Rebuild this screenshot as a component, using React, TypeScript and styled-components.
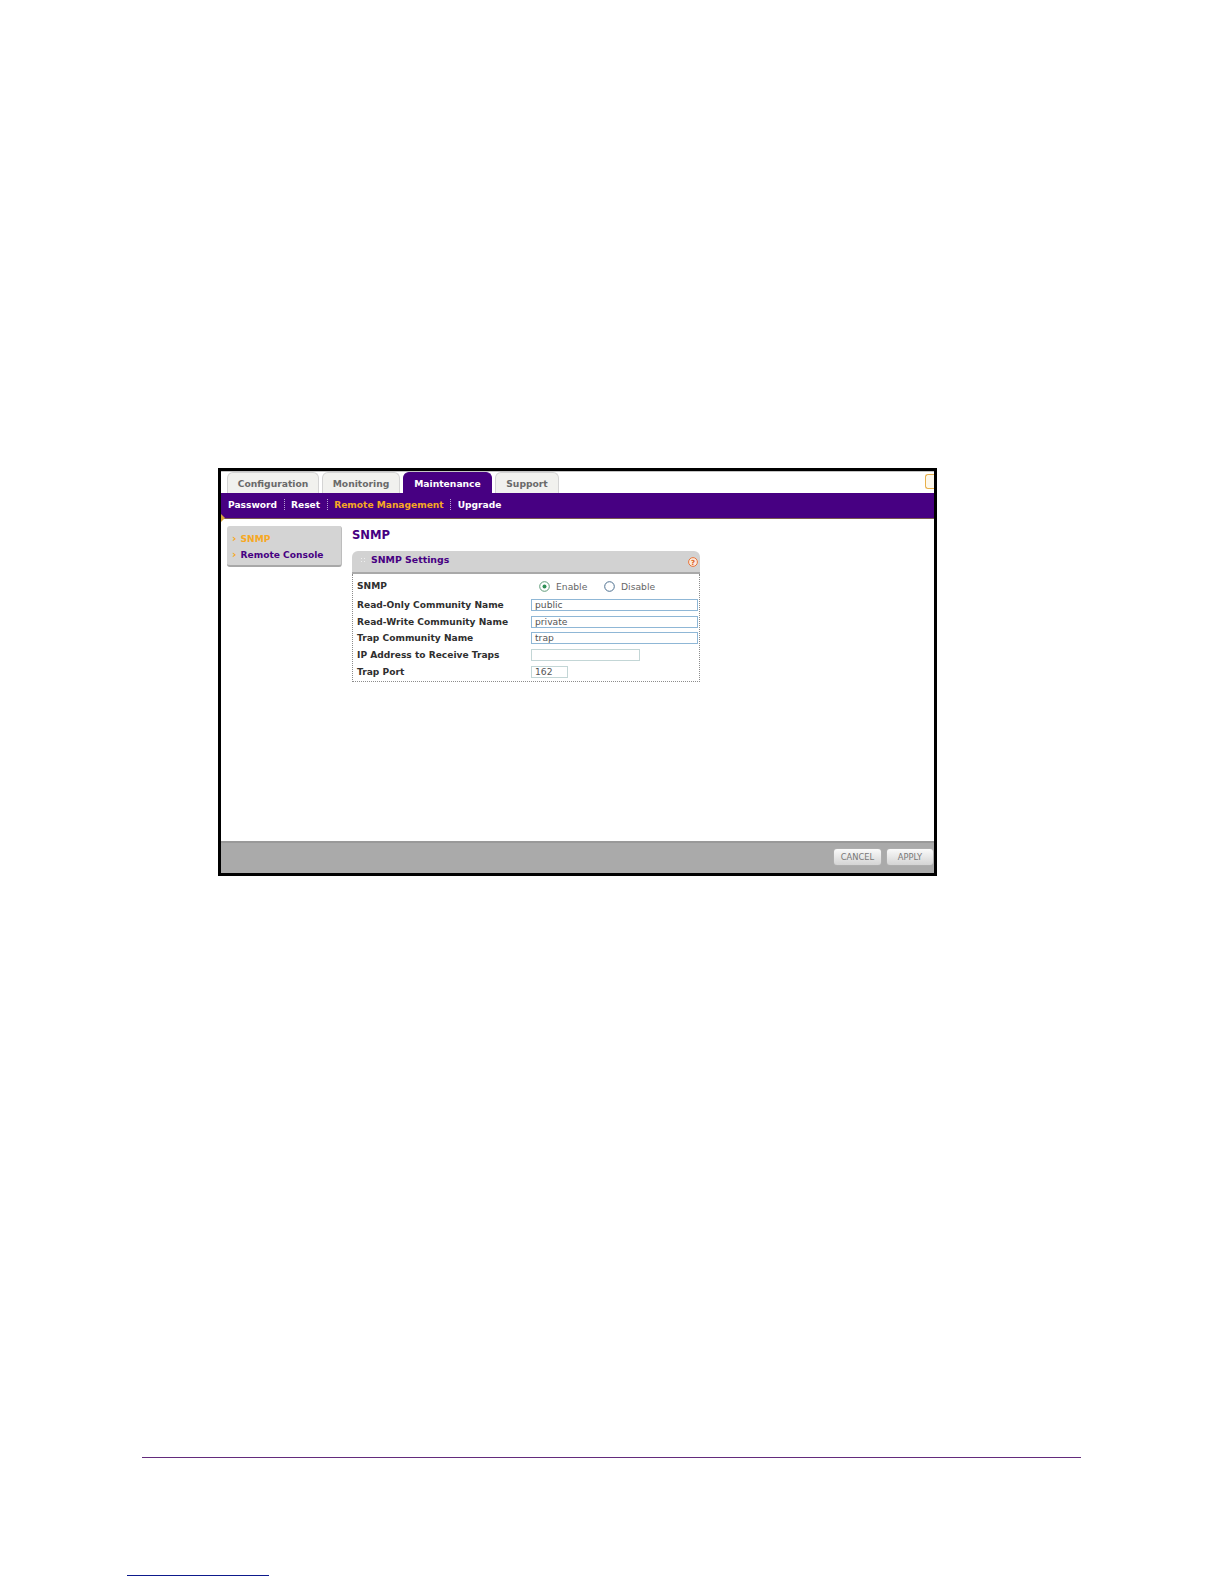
import React from "react";
import styled, { createGlobalStyle } from "styled-components";

const GlobalStyle = createGlobalStyle`
  html, body {
    margin: 0;
    padding: 0;
    background: #fff;
    font-family: "DejaVu Sans", Verdana, sans-serif;
  }
`;

const Page = styled.div`
  width: 1224px;
  height: 1584px;
  box-sizing: border-box;
  padding-top: 468px;
  overflow: hidden;
`;

const Frame = styled.div`
  display: flex;
  flex-direction: column;
  width: 719px;
  height: 408px;
  margin-left: 218px;
  box-sizing: border-box;
  border: 3px solid #000;
  background: #fff;
`;

const TabBar = styled.div`
  display: flex;
  align-items: flex-end;
  justify-content: space-between;
  height: 22px;
  box-sizing: border-box;
  border-top: 1px solid #c4c4c4;
  padding-left: 6px;
`;

const Tabs = styled.div`
  display: flex;
  gap: 3px;
`;

const Tab = styled.div<{ $active?: boolean; $width: number }>`
  width: ${p => p.$width}px;
  height: 21px;
  box-sizing: border-box;
  border-radius: 6px 6px 0 0;
  border: 1px solid ${p => (p.$active ? "#470082" : "#d4d4d4")};
  border-bottom: none;
  background: ${p => (p.$active ? "#470082" : "#f1f1ee")};
  color: ${p => (p.$active ? "#fff" : "#6a6a6a")};
  font-size: 9.2px;
  font-weight: bold;
  line-height: 22px;
  text-align: center;
`;

const LogoutChip = styled.div`
  width: 9px;
  height: 15px;
  margin-bottom: 4px;
  box-sizing: border-box;
  border: 1px solid #e8b04a;
  border-right: none;
  border-radius: 3px 0 0 3px;
  background: #fdf8ec;
`;

const SubNav = styled.div`
  position: relative;
  display: flex;
  align-items: center;
  height: 26px;
  padding: 0 0 2px 7px;
  box-sizing: border-box;
  background: #470082;
  border-bottom: 1px solid #7a5a50;
`;

const NavCorner = styled.span`
  position: absolute;
  left: 0;
  bottom: -4px;
  width: 0;
  height: 0;
  border-top: 4px solid transparent;
  border-bottom: 4px solid transparent;
  border-left: 4px solid #d9a53a;
`;

const NavLink = styled.span<{ $active?: boolean }>`
  color: ${p => (p.$active ? "#f7a823" : "#fff")};
  font-size: 9.1px;
  font-weight: bold;
  white-space: nowrap;
`;

const NavDivider = styled.span`
  height: 11px;
  margin: 0 6.5px;
  border-left: 1px dotted #b9a5d4;
`;

const Body = styled.div`
  flex: 1;
  display: flex;
  align-items: flex-start;
  padding: 7px 0 0 6px;
  gap: 10px;
`;

const SideMenu = styled.div`
  display: flex;
  flex-direction: column;
  gap: 5px;
  width: 115px;
  height: 41px;
  box-sizing: border-box;
  padding: 7px 0 0 5px;
  border-radius: 3px;
  background: #d4d4d4;
  border-bottom: 2px solid #a8a8a8;
  border-right: 1px solid #bdbdbd;
`;

const SideItem = styled.div<{ $active?: boolean }>`
  display: flex;
  align-items: center;
  gap: 4px;
  height: 11px;
  color: ${p => (p.$active ? "#f7a823" : "#470082")};
  font-size: 9.1px;
  font-weight: bold;
  white-space: nowrap;

  &::before {
    content: "›";
    color: #f7a823;
    font-size: 11px;
    font-weight: bold;
  }
`;

const Content = styled.div`
  display: flex;
  flex-direction: column;
`;

const Title = styled.h1`
  margin: 1px 0 7px;
  height: 17px;
  color: #470082;
  font-size: 11.6px;
  font-weight: bold;
  line-height: 17px;
`;

const Panel = styled.div`
  width: 348px;
  height: 131px;
  display: flex;
  flex-direction: column;
`;

const PanelHeader = styled.div`
  position: relative;
  display: flex;
  align-items: flex-start;
  gap: 6px;
  height: 23px;
  box-sizing: border-box;
  padding: 2px 0 0 8px;
  border-radius: 6px 6px 0 0;
  background: #d2d2d2;
  border-bottom: 2px solid #a9a9a9;
`;

const Grip = styled.span`
  width: 5px;
  height: 6px;
  margin-top: 4px;
  background-image: radial-gradient(#eee 40%, transparent 45%);
  background-size: 3px 3px;
`;

const PanelTitle = styled.span`
  color: #470082;
  font-size: 9.4px;
  font-weight: bold;
  line-height: 14px;
`;

const HelpIcon = styled.svg`
  position: absolute;
  right: 2px;
  top: 6px;
`;

const Rows = styled.div`
  flex: 1;
  display: flex;
  flex-direction: column;
  box-sizing: border-box;
  padding-top: 1.5px;
  border: 1px dotted #8c8c8c;
  border-top: none;
`;

const Row = styled.div<{ $tall?: boolean }>`
  display: grid;
  grid-template-columns: 174px 1fr;
  align-items: center;
  height: ${p => (p.$tall ? 21 : 16.7)}px;
  padding-left: 4px;
`;

const Label = styled.span`
  color: #2f2f2f;
  font-size: 9.1px;
  font-weight: bold;
  white-space: nowrap;
`;

const Field = styled.div<{ $width: number; $muted?: boolean }>`
  width: ${p => p.$width}px;
  height: 12px;
  box-sizing: border-box;
  padding-left: 3px;
  border: 1px solid ${p => (p.$muted ? "#c3d6d6" : "#8fb7d6")};
  color: #555;
  font-size: 9.2px;
  line-height: 10px;
`;

const RadioGroup = styled.div`
  display: flex;
  align-items: center;
  padding-left: 8px;
`;

const RadioOption = styled.div`
  display: flex;
  align-items: center;
  gap: 6px;
  width: 65px;
  color: #666;
  font-size: 9.2px;
`;

const Footer = styled.div`
  display: flex;
  align-items: flex-start;
  justify-content: flex-end;
  gap: 6px;
  height: 32px;
  box-sizing: border-box;
  padding: 6px 1px 0 0;
  background: #aaaaaa;
  border-top: 2px solid #999;
`;

const FooterButton = styled.div<{ $width: number }>`
  width: ${p => p.$width}px;
  height: 16px;
  border-radius: 3px;
  background: linear-gradient(#fafafa, #d4d4d4);
  box-shadow: 0 0 1px #cfcfcf;
  color: #777;
  font-size: 8.3px;
  line-height: 16px;
  text-align: center;
`;

const PageRule = styled.div`
  width: 939px;
  height: 1px;
  margin: 581px 0 0 142px;
  background: #632b7c;
`;

const NoteRule = styled.div`
  width: 142px;
  height: 1px;
  margin: 117px 0 0 127px;
  background: #0d1a8c;
`;

const Radio = ({ checked }: { checked?: boolean }) => (
  <svg width="11" height="11" viewBox="0 0 11 11">
    <circle
      cx="5.5"
      cy="5.5"
      r="4.8"
      fill="#fff"
      stroke={checked ? "#5d9a78" : "#4d6f8f"}
      strokeWidth="1"
    />
    {checked && <circle cx="5.5" cy="5.5" r="2" fill="#2f8f55" />}
  </svg>
);

const navItems = ["Password", "Reset", "Remote Management", "Upgrade"];

const tabs = [
  { name: "Configuration", width: 92 },
  { name: "Monitoring", width: 78 },
  { name: "Maintenance", width: 89, active: true },
  { name: "Support", width: 64 }
];

const fields = [
  { label: "Read-Only Community Name", value: "public", width: 167 },
  { label: "Read-Write Community Name", value: "private", width: 167 },
  { label: "Trap Community Name", value: "trap", width: 167 },
  { label: "IP Address to Receive Traps", value: "", width: 109, muted: true },
  { label: "Trap Port", value: "162", width: 37, muted: true }
];

const App = () => {
  return (
    <>
      <GlobalStyle />
      <Page>
        <Frame>
          <TabBar>
            <Tabs>
              {tabs.map(tab => (
                <Tab key={tab.name} $active={tab.active} $width={tab.width}>
                  {tab.name}
                </Tab>
              ))}
            </Tabs>
            <LogoutChip />
          </TabBar>
          <SubNav>
            {navItems.map((item, i) => (
              <React.Fragment key={item}>
                {i > 0 && <NavDivider />}
                <NavLink $active={item === "Remote Management"}>{item}</NavLink>
              </React.Fragment>
            ))}
            <NavCorner />
          </SubNav>
          <Body>
            <SideMenu>
              <SideItem $active>SNMP</SideItem>
              <SideItem>Remote Console</SideItem>
            </SideMenu>
            <Content>
              <Title>SNMP</Title>
              <Panel>
                <PanelHeader>
                  <Grip />
                  <PanelTitle>SNMP Settings</PanelTitle>
                  <HelpIcon width="10" height="10" viewBox="0 0 10 10">
                    <circle cx="5" cy="5" r="4.4" fill="#fbe9dc" stroke="#e8743a" />
                    <text x="5" y="7.6" fontSize="7" fontWeight="bold" fill="#d9601f" textAnchor="middle">
                      ?
                    </text>
                  </HelpIcon>
                </PanelHeader>
                <Rows>
                  <Row $tall>
                    <Label>SNMP</Label>
                    <RadioGroup>
                      <RadioOption>
                        <Radio checked />
                        Enable
                      </RadioOption>
                      <RadioOption>
                        <Radio />
                        Disable
                      </RadioOption>
                    </RadioGroup>
                  </Row>
                  {fields.map(field => (
                    <Row key={field.label}>
                      <Label>{field.label}</Label>
                      <Field $width={field.width} $muted={field.muted}>
                        {field.value}
                      </Field>
                    </Row>
                  ))}
                </Rows>
              </Panel>
            </Content>
          </Body>
          <Footer>
            <FooterButton $width={47}>CANCEL</FooterButton>
            <FooterButton $width={46}>APPLY</FooterButton>
          </Footer>
        </Frame>
        <PageRule />
        <NoteRule />
      </Page>
    </>
  );
};

export default App;
